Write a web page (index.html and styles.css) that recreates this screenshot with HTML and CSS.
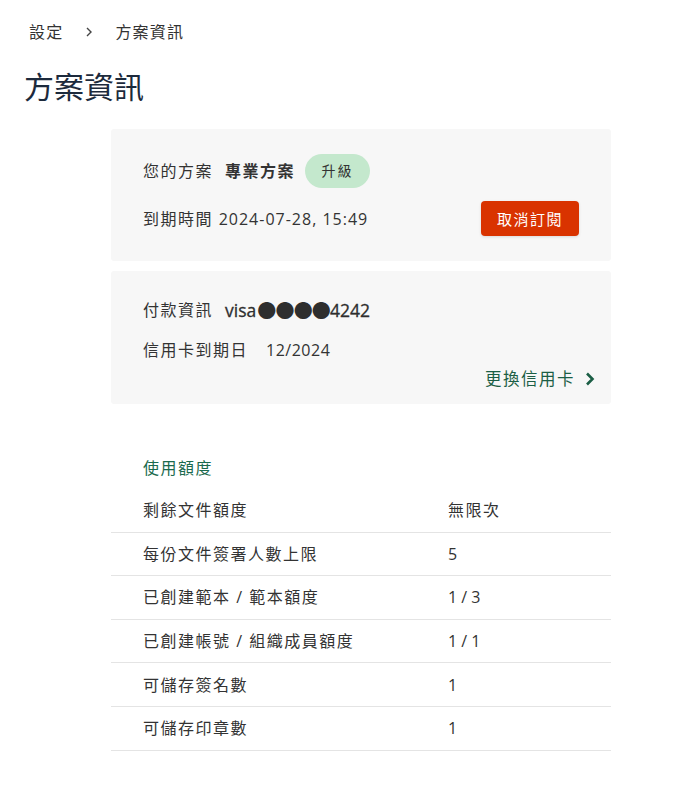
FILE: index.html
```html
<!DOCTYPE html>
<html lang="zh-Hant">
<head>
<meta charset="utf-8">
<title>方案資訊</title>
<link rel="stylesheet" href="styles.css">
</head>
<body>
<nav class="crumbs">
  <span class="crumb">設定</span>
  <svg class="crumb-sep" width="8" height="12" viewBox="0 0 8 12"><path d="M2 2l4 4-4 4" fill="none" stroke="#444" stroke-width="1.4"/></svg>
  <span class="crumb">方案資訊</span>
</nav>
<h1 class="page-title">方案資訊</h1>
<main class="content">
  <section class="card plan">
    <div class="row">
      <span class="label">您的方案</span>
      <strong class="plan-name">專業方案</strong>
      <span class="badge">升級</span>
    </div>
    <div class="row spread">
      <span class="label">到期時間 <span class="latin date">2024-07-28, 15:49</span></span>
      <button class="btn-cancel">取消訂閱</button>
    </div>
  </section>
  <section class="card pay">
    <div class="line">
      <span class="label">付款資訊</span>
      <span class="card-no latin">visa<span class="dots">●●●●</span>4242</span>
    </div>
    <div class="line">
      <span class="label">信用卡到期日</span>
      <span class="exp latin">12/2024</span>
    </div>
    <div class="link-row">
      <a class="link" href="#">更換信用卡
        <svg class="chev" width="12" height="16" viewBox="0 0 12 16"><path d="M3 2.5l5.5 5.5-5.5 5.5" fill="none" stroke="#1b5e45" stroke-width="2.6"/></svg>
      </a>
    </div>
  </section>
  <section class="usage">
    <h2 class="usage-title">使用額度</h2>
    <div class="urow"><span class="ulabel">剩餘文件額度</span><span class="uval">無限次</span></div>
    <div class="urow"><span class="ulabel">每份文件簽署人數上限</span><span class="uval num">5</span></div>
    <div class="urow"><span class="ulabel">已創建範本 / 範本額度</span><span class="uval num">1 / 3</span></div>
    <div class="urow"><span class="ulabel">已創建帳號 / 組織成員額度</span><span class="uval num">1 / 1</span></div>
    <div class="urow"><span class="ulabel">可儲存簽名數</span><span class="uval num">1</span></div>
    <div class="urow"><span class="ulabel">可儲存印章數</span><span class="uval num">1</span></div>
  </section>
</main>
</body>
</html>
```
FILE: styles.css
```css
html, body {
  margin: 0;
  padding: 0;
  background: #ffffff;
}
body {
  font-family: "Open Sans", "Noto Sans CJK TC", sans-serif;
  color: #333333;
  font-size: 16px;
  line-height: 24px;
}
.latin {
  font-family: "Open Sans", "Noto Sans CJK TC", sans-serif;
  letter-spacing: 0;
}
.date {
  letter-spacing: 1px;
}
.crumbs {
  display: flex;
  align-items: center;
  padding: 20px 0 0 29px;
  height: 24px;
}
.crumb {
  font-size: 16px;
  letter-spacing: 1.2px;
  color: #333;
}
.crumb-sep {
  margin: 0 22px 0 22px;
}
.page-title {
  margin: 23px 0 0 24px;
  font-size: 30px;
  line-height: 40px;
  font-weight: 400;
  color: #1c2a3c;
}
.content {
  width: 500px;
  margin: 22px 0 0 111px;
}
.card {
  background: #f7f7f7;
  border-radius: 3px;
}
.plan {
  padding: 25px 32px;
  display: flex;
  flex-direction: column;
  gap: 13px;
}
.row {
  display: flex;
  align-items: center;
}
.spread {
  justify-content: space-between;
}
.label {
  font-size: 16px;
  letter-spacing: 1.5px;
}
.plan-name {
  font-weight: 700;
  margin-left: 12px;
  letter-spacing: 1.5px;
}
.badge {
  margin-left: 10px;
  height: 34px;
  width: 65px;
  border-radius: 17px;
  background: #c4e8cd;
  display: flex;
  align-items: center;
  justify-content: center;
  font-size: 14px;
  letter-spacing: 2px;
  color: #333;
}
.btn-cancel {
  height: 35px;
  width: 98px;
  border: none;
  border-radius: 4px;
  background: #d93300;
  color: #ffffff;
  font-family: "Noto Sans CJK TC", sans-serif;
  font-size: 15px;
  letter-spacing: 1.5px;
  box-shadow: 0 1px 3px rgba(0,0,0,0.12);
  padding: 0;
}
.pay {
  margin-top: 10px;
  padding: 27px 15px 13px 32px;
}
.line {
  display: flex;
  align-items: center;
  height: 24px;
}
.line + .line {
  margin-top: 16px;
}
.card-no {
  margin-left: 12px;
  font-size: 17.5px;
  font-weight: 500;
  color: #2e2e2e;
  display: flex;
  align-items: center;
  -webkit-text-stroke: 0.3px #2e2e2e;
}
.dots {
  font-family: "Noto Sans CJK TC", sans-serif;
  font-size: 19px;
  letter-spacing: -0.8px;
  margin: 0 0 0 1px;
  -webkit-text-stroke: 0;
}
.exp {
  margin-left: 18px;
  font-size: 16px;
  letter-spacing: 0.5px;
}
.link-row {
  display: flex;
  justify-content: flex-end;
  margin-top: 5px;
}
.link {
  display: flex;
  align-items: center;
  gap: 9px;
  color: #1b5e45;
  text-decoration: none;
  font-size: 16.5px;
  letter-spacing: 1.5px;
}
.usage {
  margin-top: 52px;
}
.usage-title {
  margin: 0 0 9px 32px;
  font-size: 16px;
  line-height: 24px;
  font-weight: 400;
  color: #1b6a4e;
  letter-spacing: 1.5px;
}
.urow {
  display: grid;
  grid-template-columns: 305px 1fr;
  padding-left: 32px;
  height: 42.6px;
  align-items: center;
  border-bottom: 1px solid #e4e4e4;
}
.ulabel {
  letter-spacing: 1.5px;
}
.uval {
  letter-spacing: 1.5px;
}
.uval.num {
  letter-spacing: 0;
}
```
